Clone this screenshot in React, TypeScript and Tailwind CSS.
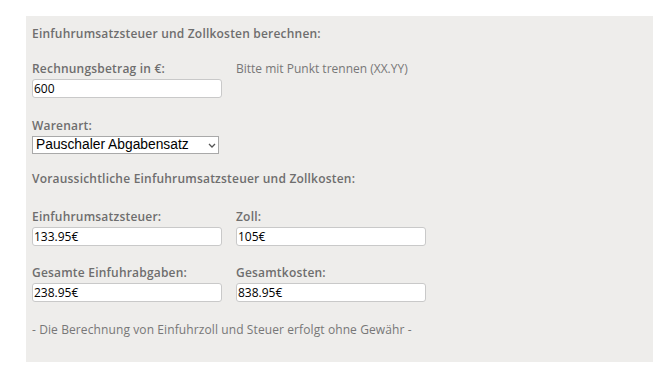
import React from "react";

const font = { fontFamily: '"Open Sans", "Liberation Sans", sans-serif' };

const Label = ({ children }: { children: React.ReactNode }) => (
  <div className="h-[18px] text-[12px] leading-[18px] font-semibold tracking-[0.2px] text-[#6e6e6e]">{children}</div>
);

const Field = ({ value }: { value: string }) => (
  <input
    readOnly
    value={value}
    className="mt-[1px] block w-[190px] h-[19px] rounded-[3px] border border-[#c9c9c9] bg-white pl-[1px] text-[12px] leading-[17px] text-black outline-none"
  />
);

export default function App() {
  return (
    <div className="w-[670px] h-[372px] bg-white pt-[16px] pl-[26px]" style={font}>
      <div className="w-[627px] h-[346px] bg-[#eeedeb] pl-[6px] pt-[9px]">
        <Label>Einfuhrumsatzsteuer und Zollkosten berechnen:</Label>

        <div className="mt-[17px] grid grid-cols-[204px_1fr]">
          <div>
            <Label>Rechnungsbetrag in €:</Label>
            <Field value="600" />
          </div>
          <div className="h-[18px] text-[12px] leading-[18px] text-[#777]">Bitte mit Punkt trennen (XX.YY)</div>
        </div>

        <div className="mt-[19px]">
          <Label>Warenart:</Label>
          <div className="relative mt-[1px] w-[187px]">
            <select
              defaultValue="p"
              className="block w-[187px] h-[18px] appearance-none border border-[#a9a9a9] bg-white pl-[3px] text-[13.8px] leading-[16px] text-black outline-none"
              style={{ fontFamily: '"Liberation Sans", Arial, sans-serif' }}
            >
              <option value="p">Pauschaler Abgabensatz</option>
            </select>
            <svg className="pointer-events-none absolute right-[3px] top-[7px]" width="8" height="5" viewBox="0 0 8 5">
              <path d="M1 1l3 3 3-3" fill="none" stroke="#555" strokeWidth="1.3" />
            </svg>
          </div>
        </div>

        <div className="mt-[16px]">
          <Label>Voraussichtliche Einfuhrumsatzsteuer und Zollkosten:</Label>
        </div>

        <div className="mt-[20px] grid grid-cols-[204px_1fr]">
          <div>
            <Label>Einfuhrumsatzsteuer:</Label>
            <Field value="133.95€" />
          </div>
          <div>
            <Label>Zoll:</Label>
            <Field value="105€" />
          </div>
        </div>

        <div className="mt-[18px] grid grid-cols-[204px_1fr]">
          <div>
            <Label>Gesamte Einfuhrabgaben:</Label>
            <Field value="238.95€" />
          </div>
          <div>
            <Label>Gesamtkosten:</Label>
            <Field value="838.95€" />
          </div>
        </div>

        <div className="mt-[19px] h-[18px] text-[12px] leading-[18px] text-[#777] tracking-[0.1px]">
          - Die Berechnung von Einfuhrzoll und Steuer erfolgt ohne Gewähr -
        </div>
      </div>
    </div>
  );
}
